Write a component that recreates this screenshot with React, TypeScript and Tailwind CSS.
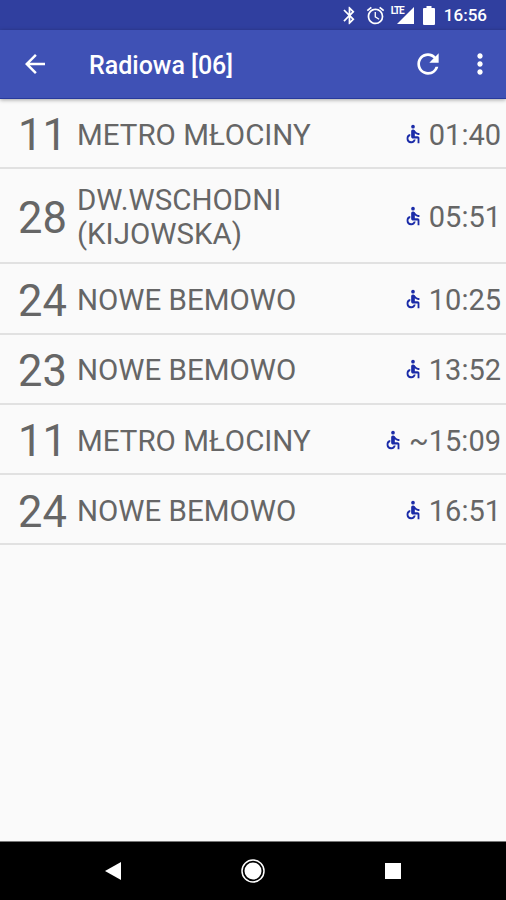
import { MdAccessible, MdAlarm, MdArrowBack, MdBluetooth, MdMoreVert, MdRefresh } from 'react-icons/md'

interface Departure {
  line: string
  direction: string
  time: string
}

const departures: Departure[] = [
  { line: '11', direction: 'METRO MŁOCINY', time: '01:40' },
  { line: '28', direction: 'DW.WSCHODNI (KIJOWSKA)', time: '05:51' },
  { line: '24', direction: 'NOWE BEMOWO', time: '10:25' },
  { line: '23', direction: 'NOWE BEMOWO', time: '13:52' },
  { line: '11', direction: 'METRO MŁOCINY', time: '~15:09' },
  { line: '24', direction: 'NOWE BEMOWO', time: '16:51' },
]

function StatusBar() {
  return (
    <div className="flex h-[30px] shrink-0 items-center justify-end bg-[#303f9f] pr-[19px] text-white">
      <MdBluetooth className="mr-[5px] size-[21px]" />
      <MdAlarm className="mr-[5px] size-[21px]" />
      <div className="relative mr-[9px] h-[19px] w-[23px]">
        <svg className="size-full" viewBox="0 0 23 19" fill="currentColor">
          <path d="M23 1v17H6l7-7V11z" />
        </svg>
        <span className="absolute top-0 left-0 text-[10px] leading-[9px] font-bold tracking-[-1.2px]">LTE</span>
      </div>
      <svg className="mr-[9px] h-[19px] w-[12px]" viewBox="0 0 12 19" fill="currentColor">
        <path d="M3.5 0h5v2H11a1 1 0 0 1 1 1v15a1 1 0 0 1-1 1H1a1 1 0 0 1-1-1V3a1 1 0 0 1 1-1h2.5z" />
      </svg>
      <span className="pt-px text-[17px] leading-none font-medium">16:56</span>
    </div>
  )
}

function AppBar() {
  return (
    <header className="z-10 flex h-[69px] shrink-0 items-center border-b border-[#283a9c] bg-[#3f51b5] pl-5 text-white shadow-[0_1px_4px_rgba(0,0,0,0.35)]">
      <button aria-label="Back">
        <MdArrowBack className="size-[30px]" />
      </button>
      <h1 className="ml-[39px] flex-1 pt-[4px] text-[25px] font-medium">Radiowa [06]</h1>
      <button aria-label="Refresh" className="mr-[20px]">
        <MdRefresh className="size-[32px]" />
      </button>
      <button aria-label="More" className="mr-[10px]">
        <MdMoreVert className="size-[32px]" />
      </button>
    </header>
  )
}

function DepartureRow({ line, direction, time }: Departure) {
  return (
    <li className="flex min-h-[70.3px] items-center border-b-2 border-[#e1e1e1] pt-[14.2px] pr-[5px] pb-[10.8px] pl-[18px] text-[#666]">
      <span className="w-[59px] pt-[2px] text-[43.5px] leading-[39px]">{line}</span>
      <span className="w-[260px] text-[29.5px] leading-[34px]">{direction}</span>
      <span className="ml-auto flex items-center text-[29px] leading-[34px]">
        <MdAccessible className="mr-[5px] mb-[2px] size-[22px] text-[#1a2ba8]" />
        {time}
      </span>
    </li>
  )
}

function NavigationBar() {
  return (
    <nav className="flex h-[59px] shrink-0 items-center border-t border-[#777] bg-black text-white">
      <svg className="ml-[105px] h-[18px] w-[16px]" viewBox="0 0 16 18" fill="currentColor">
        <path d="M16 0v18L0 9z" />
      </svg>
      <svg className="ml-[120px] size-6" viewBox="0 0 24 24">
        <circle cx="12" cy="12" r="11" fill="none" stroke="currentColor" strokeWidth="1.5" />
        <circle cx="12" cy="12" r="8.5" fill="currentColor" />
      </svg>
      <div className="ml-[120px] size-4 bg-white" />
    </nav>
  )
}

export default function App() {
  return (
    <div className="flex h-[900px] w-[506px] flex-col overflow-hidden bg-[#fafafa] font-[Roboto,sans-serif]">
      <StatusBar />
      <AppBar />
      <ul className="flex-1">
        {departures.map((departure, index) => (
          <DepartureRow key={index} {...departure} />
        ))}
      </ul>
      <NavigationBar />
    </div>
  )
}
